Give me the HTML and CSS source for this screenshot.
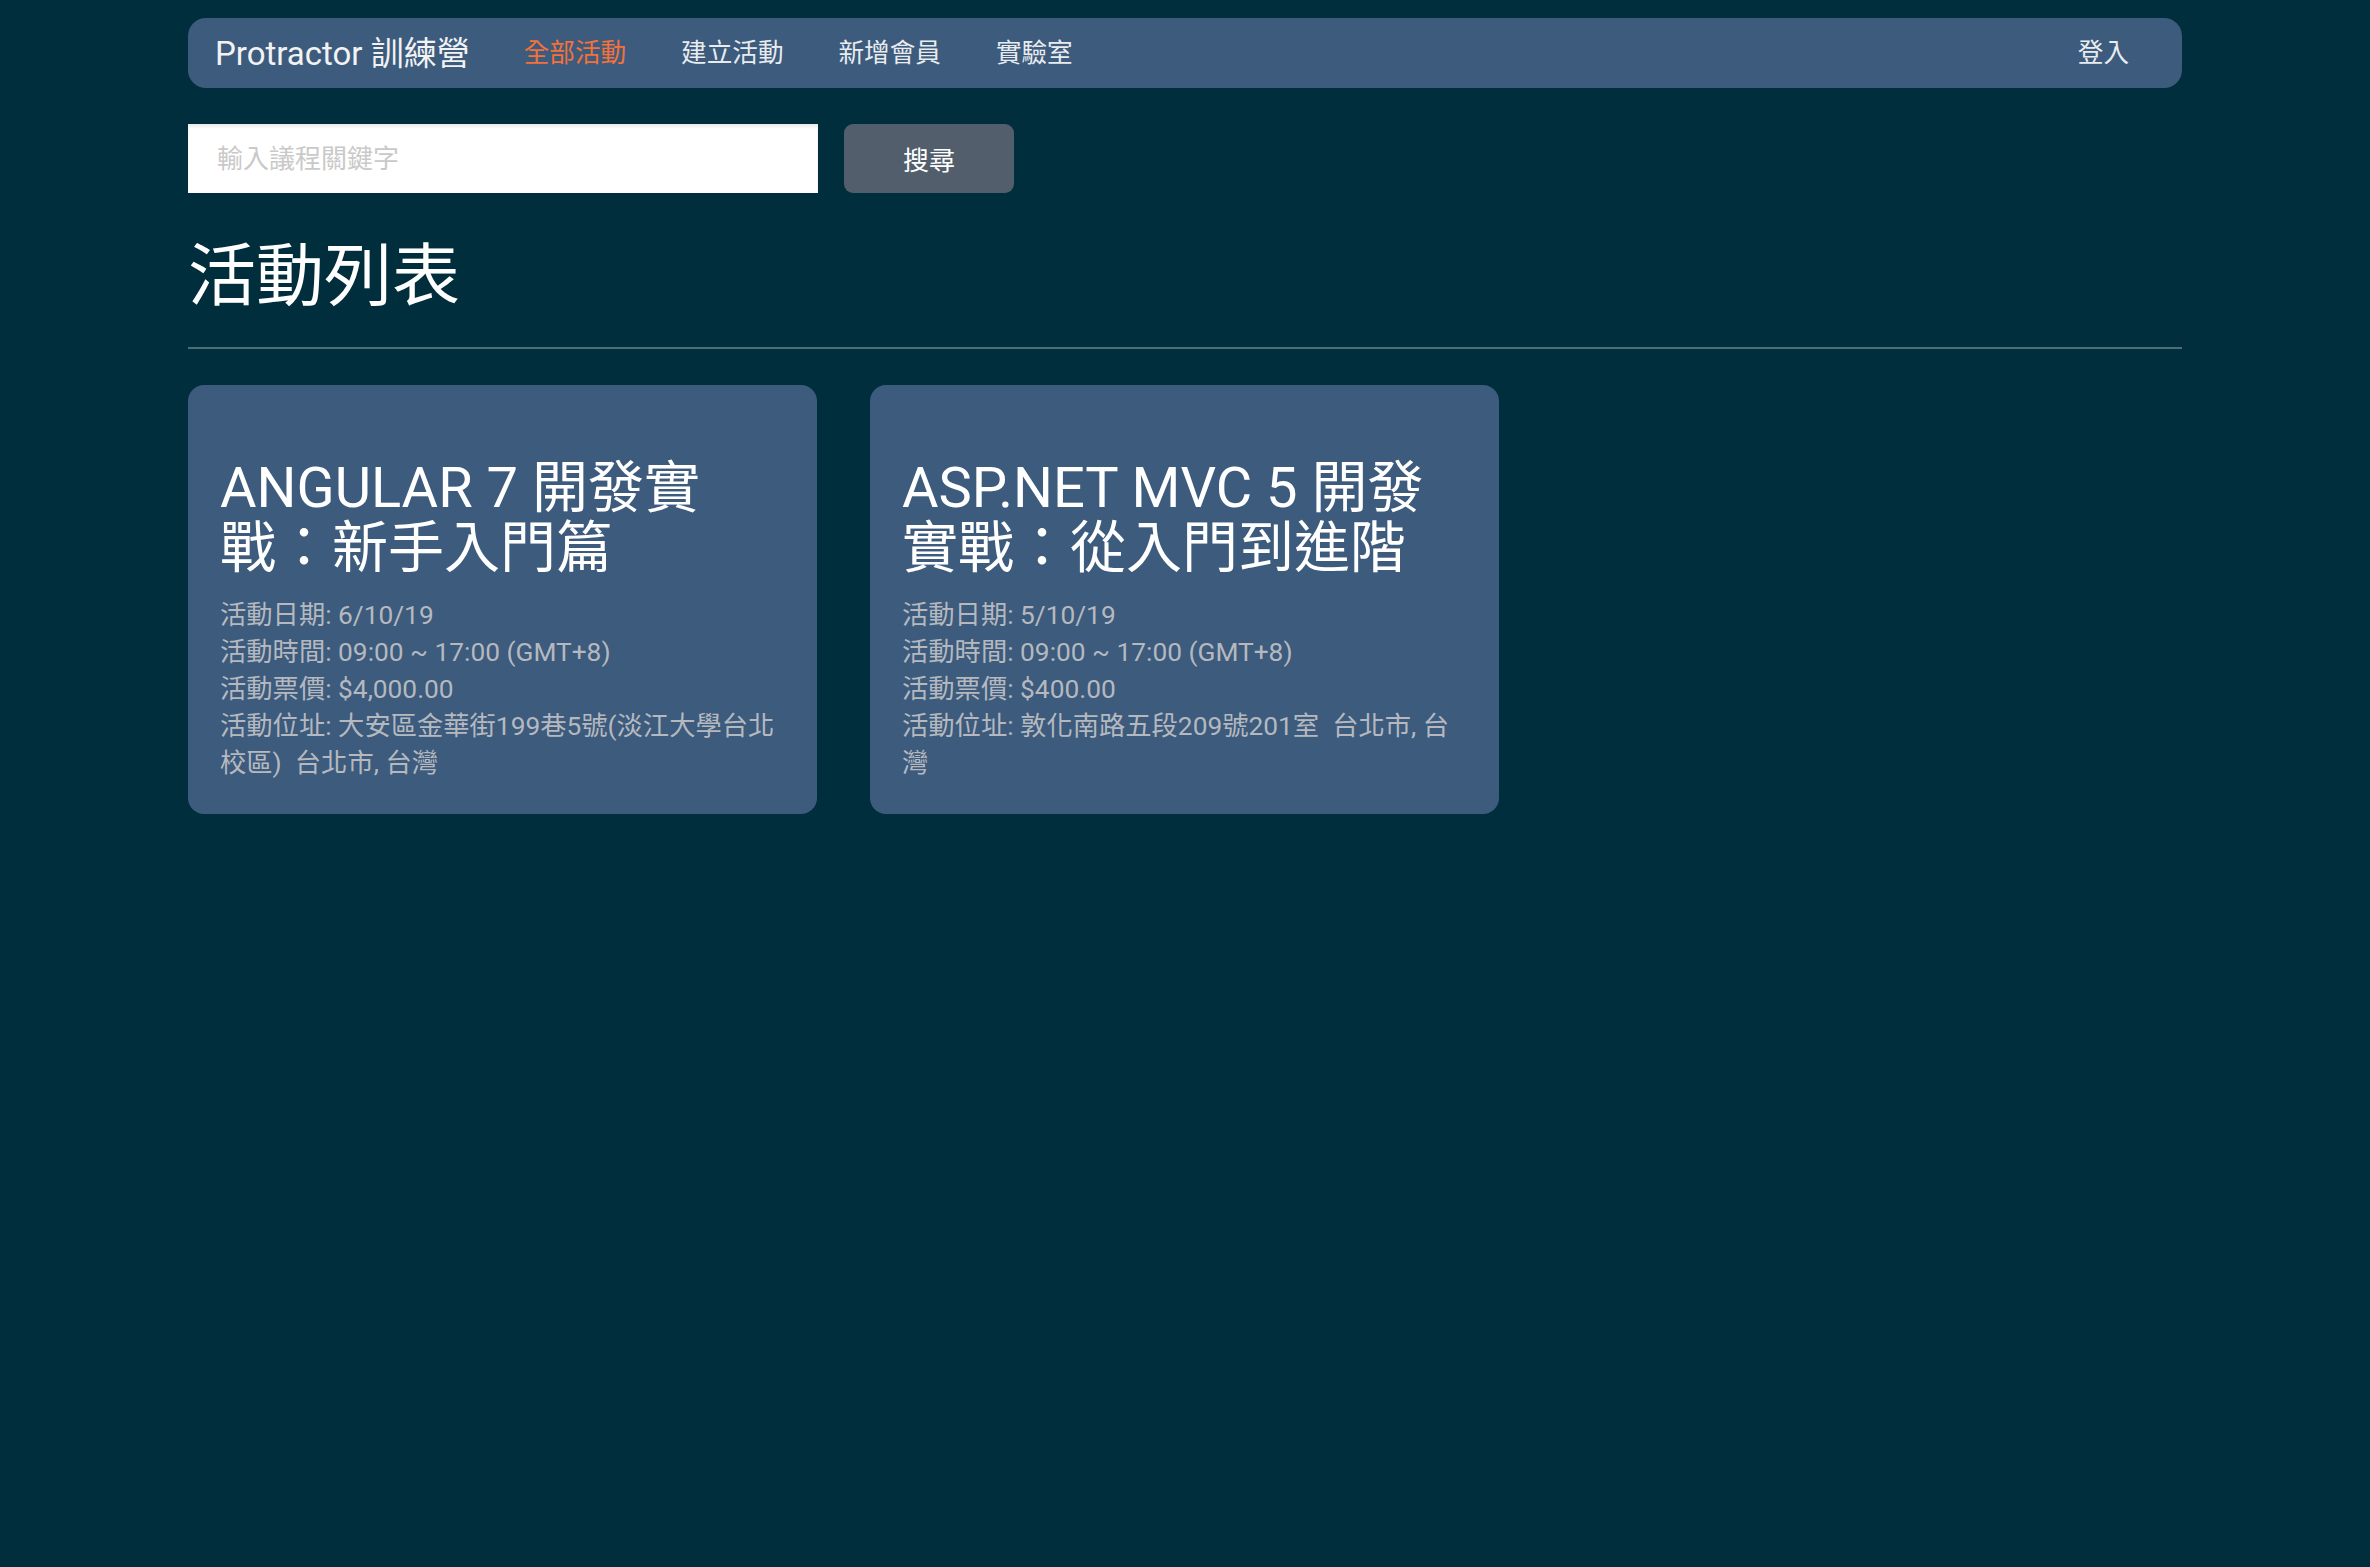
FILE: index.html
```html
<!DOCTYPE html>
<html lang="zh-Hant">
<head>
<meta charset="utf-8">
<title>Protractor 訓練營</title>
<link rel="stylesheet" href="styles.css">
</head>
<body>
<div class="container">
  <nav class="navbar">
    <a class="brand" href="#">Protractor 訓練營</a>
    <ul class="nav-links">
      <li><a class="nav-link active" href="#">全部活動</a></li>
      <li><a class="nav-link" href="#">建立活動</a></li>
      <li><a class="nav-link" href="#">新增會員</a></li>
      <li><a class="nav-link" href="#">實驗室</a></li>
    </ul>
    <a class="nav-link login" href="#">登入</a>
  </nav>

  <form class="search">
    <input class="search-input" type="text" placeholder="輸入議程關鍵字">
    <button class="search-btn" type="button">搜尋</button>
  </form>

  <h1 class="page-title">活動列表</h1>
  <hr class="divider">

  <div class="cards">
    <div class="card">
      <h2 class="card-title">ANGULAR 7 開發實戰：新手入門篇</h2>
      <div class="card-info">
        <div>活動日期: 6/10/19</div>
        <div>活動時間: 09:00 ~ 17:00 (GMT+8)</div>
        <div>活動票價: $4,000.00</div>
        <div>活動位址: 大安區金華街199巷5號(淡江大學台北校區)&nbsp;&nbsp;台北市, 台灣</div>
      </div>
    </div>
    <div class="card">
      <h2 class="card-title">ASP.NET MVC 5 開發實戰：從入門到進階</h2>
      <div class="card-info">
        <div>活動日期: 5/10/19</div>
        <div>活動時間: 09:00 ~ 17:00 (GMT+8)</div>
        <div>活動票價: $400.00</div>
        <div>活動位址: 敦化南路五段209號201室&nbsp;&nbsp;台北市, 台灣</div>
      </div>
    </div>
  </div>
</div>
</body>
</html>
```

FILE: styles.css
```css
html, body {
  margin: 0;
  padding: 0;
  background: #012e3c;
}
body {
  font-family: Roboto, "Noto Sans CJK TC", sans-serif;
  font-size: 26px;
  line-height: 37px;
  color: #f0f0f0;
}
.container {
  width: 1994px;
  margin: 0 auto;
  padding-top: 18px;
}
.navbar {
  display: flex;
  align-items: center;
  height: 70px;
  background: #3c5b7d;
  border-radius: 18px;
  padding: 0 53px 0 27px;
  box-sizing: border-box;
}
.brand {
  font-size: 33px;
  color: #f2f2f2;
  text-decoration: none;
  margin-right: 54px;
  white-space: nowrap;
}
.nav-links {
  display: flex;
  gap: 55px;
  list-style: none;
  margin: 0;
  padding: 0;
  flex: 1;
}
.nav-link {
  font-size: 25.6px;
  color: #e9ecef;
  text-decoration: none;
  white-space: nowrap;
}
.nav-link.active {
  color: #f4713a;
}
.search {
  display: flex;
  gap: 26px;
  margin: 36px 0 0;
}
.search-input {
  width: 630px;
  height: 69px;
  box-sizing: border-box;
  border: none;
  border-radius: 0;
  padding: 0 29px;
  font-family: Roboto, "Noto Sans CJK TC", sans-serif;
  font-size: 26px;
  background: #fff;
  box-shadow: inset 0 3px 3px rgba(0, 0, 0, 0.08);
  outline: none;
}
.search-input::placeholder {
  color: #c9c9c9;
}
.search-btn {
  width: 170px;
  height: 69px;
  border: none;
  border-radius: 9px;
  background: #525e6c;
  color: #fff;
  font-family: Roboto, "Noto Sans CJK TC", sans-serif;
  font-size: 26px;
}
.page-title {
  font-size: 68px;
  font-weight: normal;
  line-height: 80px;
  margin: 44px 0 0;
  color: #fff;
}
.divider {
  margin: 30px 0 0;
  border: none;
  border-top: 2px solid #4f6b73;
  height: 0;
}
.cards {
  display: grid;
  grid-template-columns: repeat(3, 629px);
  column-gap: 53px;
  margin-top: 36px;
  align-items: start;
}
.card {
  background: #3c5b7d;
  border-radius: 16px;
  padding: 73px 35px 32px 32px;
}
.card-title {
  font-size: 56px;
  font-weight: normal;
  line-height: 60px;
  margin: 0 0 19px;
  color: #fff;
}
.card-info {
  color: #b5b9bf;
  font-size: 26.3px;
  line-height: 37px;
}
```
